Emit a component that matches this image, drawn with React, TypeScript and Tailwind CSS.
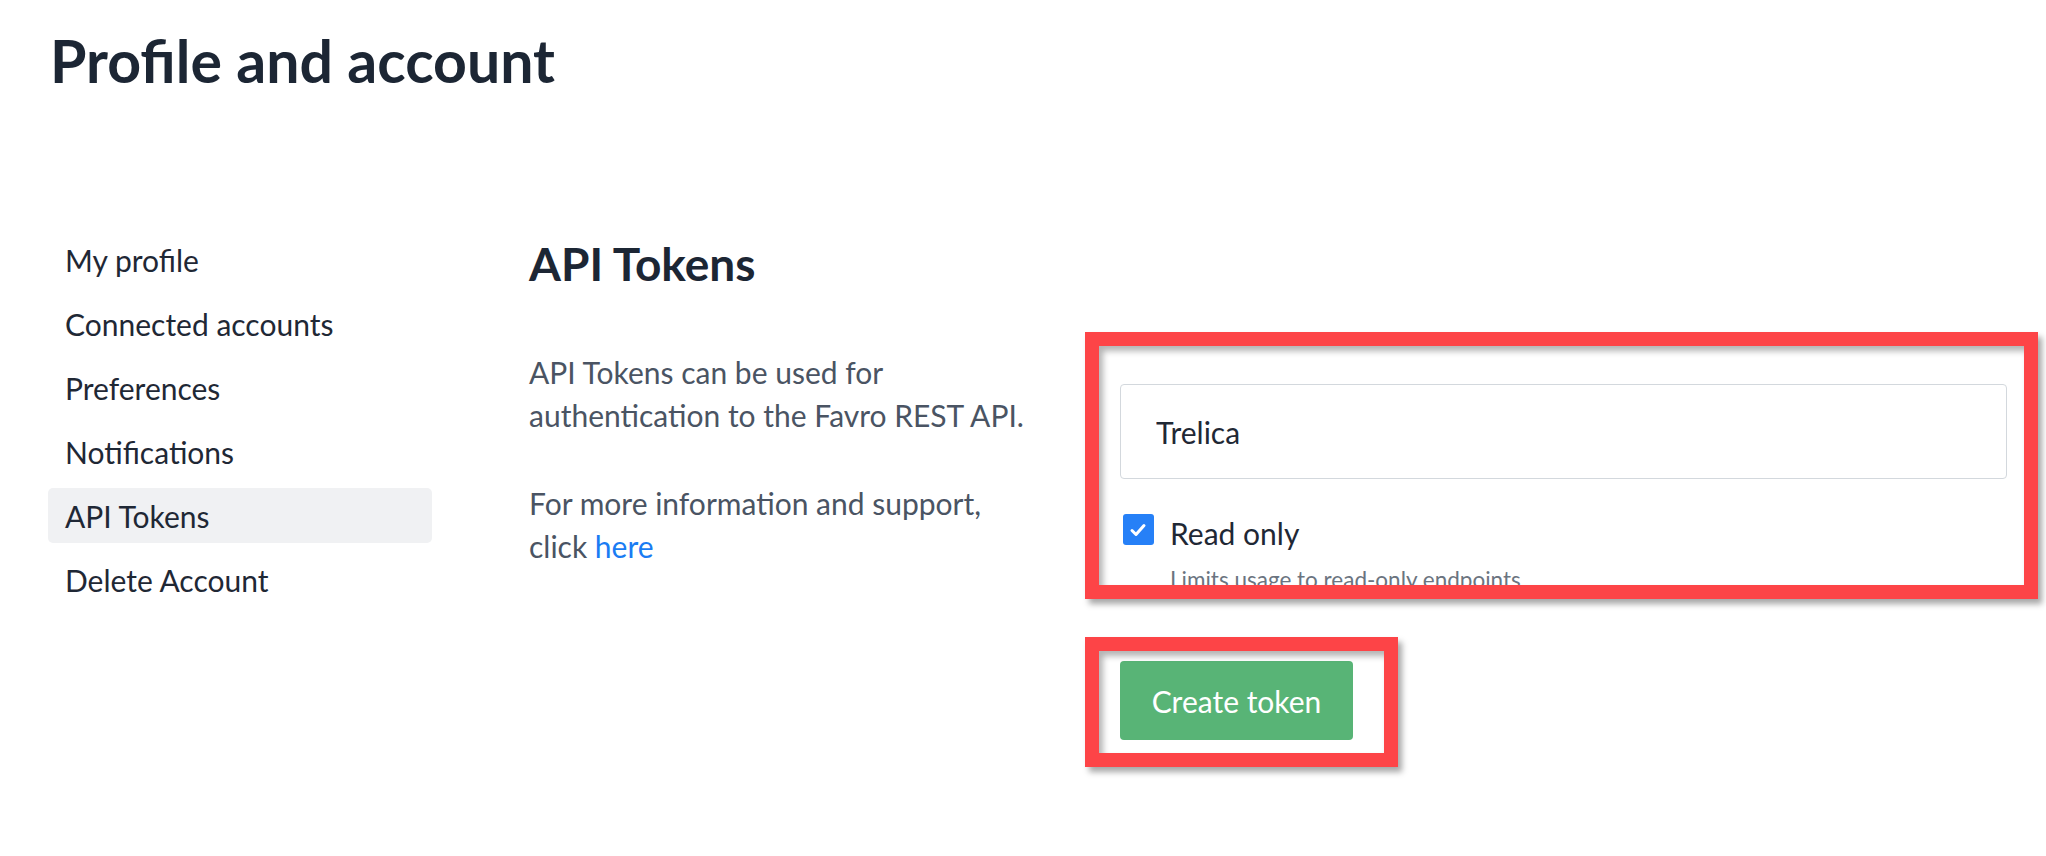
import { useState } from "react";

const navItems = [
    "My profile",
    "Connected accounts",
    "Preferences",
    "Notifications",
    "API Tokens",
    "Delete Account",
];

// red annotation frame drawn over the screenshot
const frame =
    "pointer-events-none absolute border-[14px] border-[#fd4447] shadow-[4px_5px_6px_rgba(0,0,0,0.35),inset_4px_5px_6px_rgba(0,0,0,0.3)]";

export default function App() {
    const [name, setName] = useState("Trelica");
    const [readOnly, setReadOnly] = useState(true);
    const active = "API Tokens";

    return (
        <div className="min-h-screen bg-white font-['Lato',sans-serif] text-[#1f2835]">
            <h1 className="pl-[50px] pt-[25px] text-[59px] leading-[71px] font-bold text-[#1c2634]">
                Profile and account
            </h1>

            <div className="flex mt-[136px]">
                {/* Menu lateral */}
                <nav className="w-[432px] pl-[48px] flex flex-col gap-[9px] shrink-0">
                    {navItems.map((item) => (
                        <div
                            key={item}
                            className={
                                item === active
                                    ? "h-[55px] flex items-center px-[17px] rounded-[5px] bg-[#f0f1f3] text-[30px] leading-[36px] cursor-pointer"
                                    : "h-[55px] flex items-center px-[17px] rounded-[5px] text-[30px] leading-[36px] cursor-pointer hover:bg-[#f0f1f3]"
                            }
                        >
                            {item}
                        </div>
                    ))}
                </nav>

                <main className="ml-[97px] pt-[4px]">
                    <h2 className="text-[46px] leading-[55px] font-bold text-[#1c2634]">
                        API Tokens
                    </h2>

                    <div className="flex mt-[60px]">
                        <div className="w-[510px] shrink-0 text-[30px] leading-[43px] text-[#4a5463]">
                            <p>API Tokens can be used for authentication to the Favro REST API.</p>
                            <p className="mt-[45px]">
                                For more information and support, click{" "}
                                <a className="text-[#1a7cf3] cursor-pointer">here</a>
                            </p>
                        </div>

                        {/* Formulario */}
                        <div className="relative ml-[81px] mt-[33px] w-[887px]">
                            <input
                                value={name}
                                onChange={(e) => setName(e.target.value)}
                                className="w-full h-[95px] px-[35px] border-[1.5px] border-[#d3d8dd] rounded-[4px] text-[30px] text-[#1f2835] outline-none"
                            />

                            <label className="mt-[35px] flex items-start gap-[16px] pl-[3px] cursor-pointer">
                                <button
                                    type="button"
                                    onClick={() => setReadOnly(!readOnly)}
                                    className={
                                        readOnly
                                            ? "w-[31px] h-[31px] shrink-0 rounded-[3px] bg-[#2680f7]"
                                            : "w-[31px] h-[31px] shrink-0 rounded-[3px] border-2 border-[#c4cad1] bg-white"
                                    }
                                >
                                    {readOnly && (
                                        <svg width="31" height="31" viewBox="0 0 31 31" fill="none">
                                            <path
                                                d="M9 16.5l4 4 8-9"
                                                stroke="white"
                                                strokeWidth="3"
                                                strokeLinecap="round"
                                                strokeLinejoin="round"
                                            />
                                        </svg>
                                    )}
                                </button>
                                <span className="text-[30px] leading-[38px] text-[#1f2835]">Read only</span>
                            </label>

                            <p className="mt-[14px] pl-[50px] text-[22.5px] leading-[27px] text-[#6b7480]">
                                Limits usage to read-only endpoints
                            </p>

                            <button className="mt-[68px] w-[233px] h-[79px] rounded-[4px] bg-[#58b476] text-white text-[30px] leading-[36px]">
                                Create token
                            </button>

                            <div className={`${frame} left-[-35px] top-[-52px] w-[953px] h-[267px]`} />
                            <div className={`${frame} left-[-35px] top-[253px] w-[313px] h-[130px]`} />
                        </div>
                    </div>
                </main>
            </div>
        </div>
    );
}
